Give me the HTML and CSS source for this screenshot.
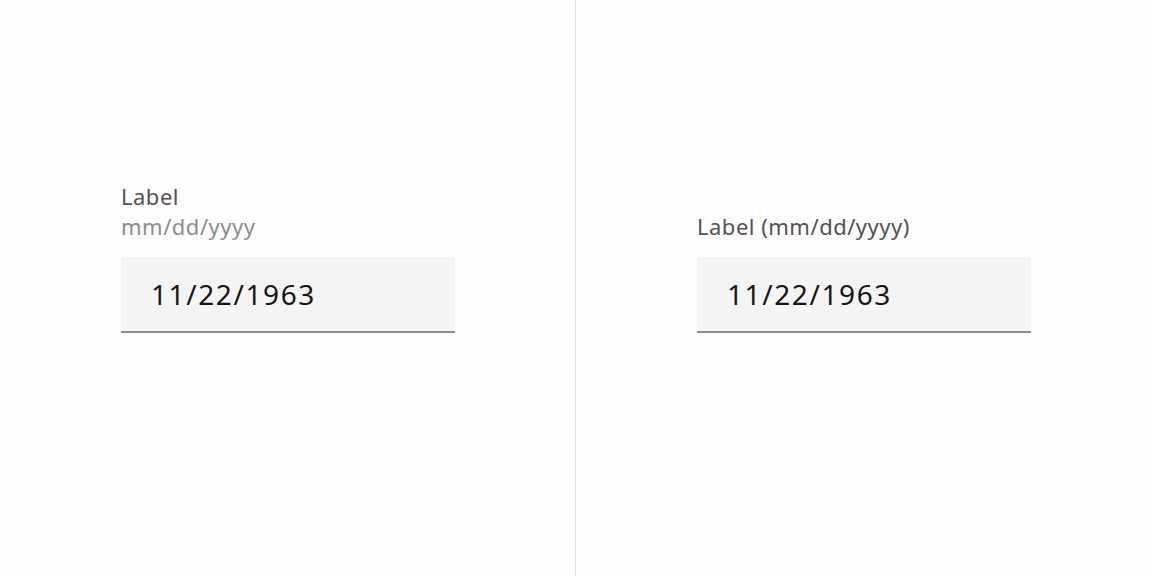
FILE: index.html
```html
<!DOCTYPE html>
<html lang="en">
<head>
    <meta charset="UTF-8">
    <meta name="viewport" content="width=device-width, initial-scale=1.0">
    <title>Date input label formats</title>
    <link rel="stylesheet" href="styles.css">
</head>
<body>
    <div class="compare">
        <!-- Format shown as helper text under the label -->
        <div class="panel panel-left">
            <div class="field">
                <label class="field-label" for="dateA">Label</label>
                <div class="field-helper">mm/dd/yyyy</div>
                <input class="field-input" id="dateA" type="text" value="11/22/1963">
            </div>
        </div>

        <!-- Format shown inline in the label -->
        <div class="panel panel-right">
            <div class="field">
                <label class="field-label" for="dateB">Label (mm/dd/yyyy)</label>
                <input class="field-input" id="dateB" type="text" value="11/22/1963">
            </div>
        </div>
    </div>
</body>
</html>
```

FILE: styles.css
```css
* {
    box-sizing: border-box;
}

body {
    margin: 0;
    background: #fdfdfd;
    font-family: "Noto Sans", "Open Sans", sans-serif;
    color: #161616;
}

.compare {
    display: flex;
    height: 576px;
}

.panel {
    flex: 0 0 576px;
    padding: 181px 0 0 121px;
}

.panel-left {
    border-right: 1px solid #e0e0e0;
}

.panel-right {
    padding-top: 211px;
}

.field {
    display: flex;
    flex-direction: column;
    width: 334px;
}

.field-label,
.field-helper {
    font-size: 22px;
    line-height: 30px;
    letter-spacing: 0.5px;
}

.field-label {
    color: #525252;
}

.field-helper {
    color: #8d8d8d;
}

.field-input {
    margin-top: 16px;
    height: 76px;
    width: 100%;
    padding: 0 0 0 30px;
    border: none;
    border-bottom: 2px solid #8d8d8d;
    background: #f4f4f4;
    font-family: inherit;
    font-size: 28px;
    letter-spacing: 1.6px;
    color: #161616;
    outline: none;
}
```
